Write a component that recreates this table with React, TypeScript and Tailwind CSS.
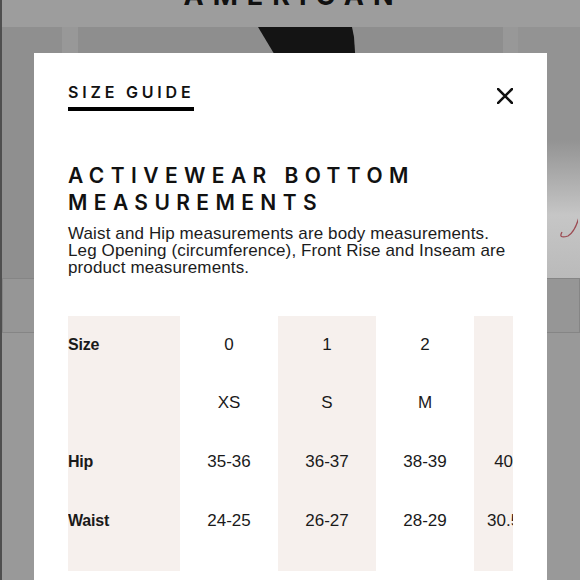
import React from "react";

const cols: { bg: string; cells: string[] }[] = [
  { bg: "bg-white", cells: ["0", "XS", "35-36", "24-25"] },
  { bg: "bg-[#f6f0ed]", cells: ["1", "S", "36-37", "26-27"] },
  { bg: "bg-white", cells: ["2", "M", "38-39", "28-29"] },
  { bg: "bg-[#f6f0ed]", cells: ["3", "L", "40-41.5", "30.5-31.5"] },
  { bg: "bg-white", cells: ["4", "XL", "42-43", "32.5-34"] },
];

const rowH = ["h-[57px]", "h-[59px]", "h-[59px]", "h-[59px]"];

export default function App() {
  return (
    <div className="relative w-[580px] h-[580px] overflow-hidden bg-[#999999]">
      {/* dimmed page behind the modal */}
      <div className="flex flex-col h-[580px] border-l-2 border-[#4f4f4f]">
        <div className="h-[27px] bg-[#9d9d9d] overflow-hidden flex justify-center">
          <div className="mt-[-18px] ml-[4px] text-[27px] leading-[27px] font-bold tracking-[9px] text-[#111] font-['Inter',sans-serif]">
            AMERICAN
          </div>
        </div>
        <div className="flex h-[251px]">
          <div className="w-[60px] bg-[#8f8f8f]" />
          <div className="w-[16px] bg-[#989898]" />
          <div className="w-[425px] bg-[#8e8e8e]">
            <svg width="425" height="251" viewBox="0 0 425 251">
              <polygon points="180,0 274,0 276,10 278,40 204,40" fill="#141414" />
            </svg>
          </div>
          <div className="w-[15px] bg-[#989898]" />
          <div className="flex-1 bg-linear-to-b from-[#939393] from-[45%] via-[#c6c6c6] via-[75%] to-[#bababa]">
            <svg width="60" height="251" viewBox="0 0 60 251">
              <path d="M44 205 Q40 212 50 209 Q58 204 62 186" stroke="#9c4a52" strokeWidth="1.3" fill="none" />
            </svg>
          </div>
        </div>
        <div className="flex h-[55px] gap-[6px]">
          <div className="w-[150px] border border-[#858585] bg-[#969696]" />
          <div className="w-[150px] border border-[#858585] bg-[#969696]" />
          <div className="w-[150px] border border-[#858585] bg-[#969696]" />
          <div className="flex-1 border border-[#858585] bg-[#969696]" />
        </div>
        <div className="flex-1 bg-[#999999]" />
      </div>

      {/* modal */}
      <div className="absolute left-[34px] top-[53px] w-[513px] h-[560px] bg-white px-[34px] pt-[31px] text-[#111]">
        <div className="flex justify-between items-start">
          <div className="border-b-4 border-black pb-[7px] text-[16px] leading-[16px] font-semibold tracking-[3.8px] font-['Inter',sans-serif]">
            SIZE GUIDE
          </div>
          <svg className="mt-[4px]" width="16" height="16" viewBox="0 0 16 16">
            <path d="M1 1 L15 15 M15 1 L1 15" stroke="#111" strokeWidth="2.6" strokeLinecap="square" />
          </svg>
        </div>

        <h1 className="mt-[51px] text-[21px] leading-[27px] font-semibold tracking-[6.4px] font-['Inter',sans-serif]">
          <span className="block whitespace-nowrap">ACTIVEWEAR BOTTOM</span>
          <span className="block whitespace-nowrap">MEASUREMENTS</span>
        </h1>

        <p className="mt-[9px] text-[17px] leading-[17px] tracking-[0.12px] text-[#1c1c1c] font-['Liberation_Sans',Arial,sans-serif]">
          <span className="block whitespace-nowrap">Waist and Hip measurements are body measurements.</span>
          <span className="block whitespace-nowrap">Leg Opening (circumference), Front Rise and Inseam are</span>
          <span className="block whitespace-nowrap">product measurements.</span>
        </p>

        <div className="mt-[40px] w-[445px] overflow-hidden flex font-['Liberation_Sans',Arial,sans-serif] text-[#1a1a1a]">
          <div className="w-[112px] shrink-0 h-[255px] bg-[#f6f0ed] flex flex-col">
            {["Size", "", "Hip", "Waist"].map((l, i) => (
              <div key={i} className={`${rowH[i]} flex items-center text-[16px] font-bold tracking-[-0.2px]`}>
                {l}
              </div>
            ))}
          </div>
          {cols.map((c, ci) => (
            <div key={ci} className={`w-[98px] shrink-0 h-[255px] ${c.bg} flex flex-col`}>
              {c.cells.map((t, i) => (
                <div key={i} className={`${rowH[i]} flex items-center justify-center text-[17px] whitespace-nowrap`}>
                  {t}
                </div>
              ))}
            </div>
          ))}
        </div>
      </div>
    </div>
  );
}
